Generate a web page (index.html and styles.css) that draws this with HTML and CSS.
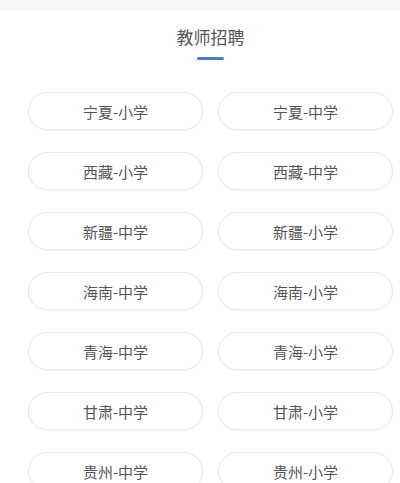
FILE: index.html
```html
<!DOCTYPE html>
<html lang="zh-CN">
<head>
<meta charset="utf-8">
<title>教师招聘</title>
<link rel="stylesheet" href="styles.css">
</head>
<body>
<div class="top-band"></div>
<section class="section">
  <h2 class="title">教师招聘</h2>
  <div class="underline"></div>
  <div class="grid">
    <a class="btn">宁夏-小学</a>
    <a class="btn">宁夏-中学</a>
    <a class="btn">西藏-小学</a>
    <a class="btn">西藏-中学</a>
    <a class="btn">新疆-中学</a>
    <a class="btn">新疆-小学</a>
    <a class="btn">海南-中学</a>
    <a class="btn">海南-小学</a>
    <a class="btn">青海-中学</a>
    <a class="btn">青海-小学</a>
    <a class="btn">甘肃-中学</a>
    <a class="btn">甘肃-小学</a>
    <a class="btn">贵州-中学</a>
    <a class="btn">贵州-小学</a>
  </div>
</section>
</body>
</html>
```
FILE: styles.css
```css
html, body {
  margin: 0;
  padding: 0;
  background: #fff;
  font-family: "Noto Sans CJK SC", "Noto Sans", sans-serif;
  color: #555;
}
.top-band {
  height: 10px;
  background: #f7f7f7;
}
.section {
  padding: 0 7px 0 28px;
  display: flex;
  flex-direction: column;
  align-items: center;
}
.title {
  margin: 15px 0 0;
  font-size: 17px;
  line-height: 24px;
  font-weight: 400;
  color: #555;
}
.underline {
  margin-top: 8px;
  width: 27px;
  height: 3px;
  border-radius: 2px;
  background: #4a7dc6;
}
.grid {
  margin-top: 32px;
  width: 100%;
  display: grid;
  grid-template-columns: 1fr 1fr;
  column-gap: 15px;
  row-gap: 22px;
}
.btn {
  height: 38px;
  box-sizing: border-box;
  border: 1px solid #e8e8e8;
  border-radius: 19px;
  box-shadow: 0 1px 2px rgba(0,0,0,0.04);
  display: flex;
  align-items: center;
  justify-content: center;
  font-size: 15px;
  color: #555;
  text-decoration: none;
}
```
